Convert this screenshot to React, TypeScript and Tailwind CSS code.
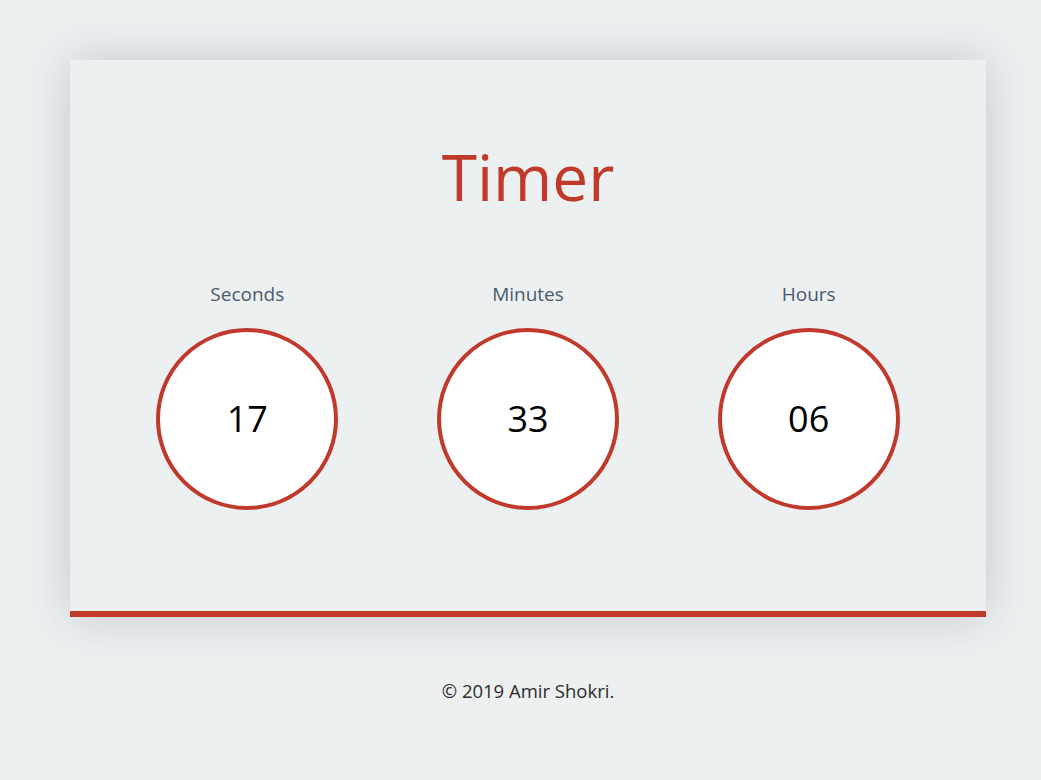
const units = [
  { label: "Seconds", value: "17" },
  { label: "Minutes", value: "33" },
  { label: "Hours", value: "06" },
];

export default function App() {
  return (
    <main className="min-h-[780px] bg-[#ecf0f1] pt-[60px] font-['Open_Sans',sans-serif]">
      <section className="ml-[70px] w-[916px] h-[557px] bg-[#ecf0f1] border-b-[6px] border-[#c0392b] shadow-[0_0_45px_rgba(44,62,80,0.22)]">
        <h1 className="pt-[67px] text-center text-[64px] leading-[100px] text-[#c0392b]">Timer</h1>

        {/* counters */}
        <div className="mt-[54px] mx-auto w-[842px] grid grid-cols-3">
          {units.map((u) => (
            <div key={u.label} className="flex flex-col items-center">
              <p className="text-[19px] leading-[26px] text-[#4a5a6e]">{u.label}</p>
              <div className="mt-[21px] w-[182px] h-[182px] rounded-full bg-white border-4 border-[#c0392b] flex items-center justify-center">
                <span className="text-[36px] text-black">{u.value}</span>
              </div>
            </div>
          ))}
        </div>
      </section>

      <footer className="mt-[60px] ml-[70px] w-[916px] text-center text-[18.5px] text-[#2c2c2c]">
        © 2019 Amir Shokri.
      </footer>
    </main>
  );
}
